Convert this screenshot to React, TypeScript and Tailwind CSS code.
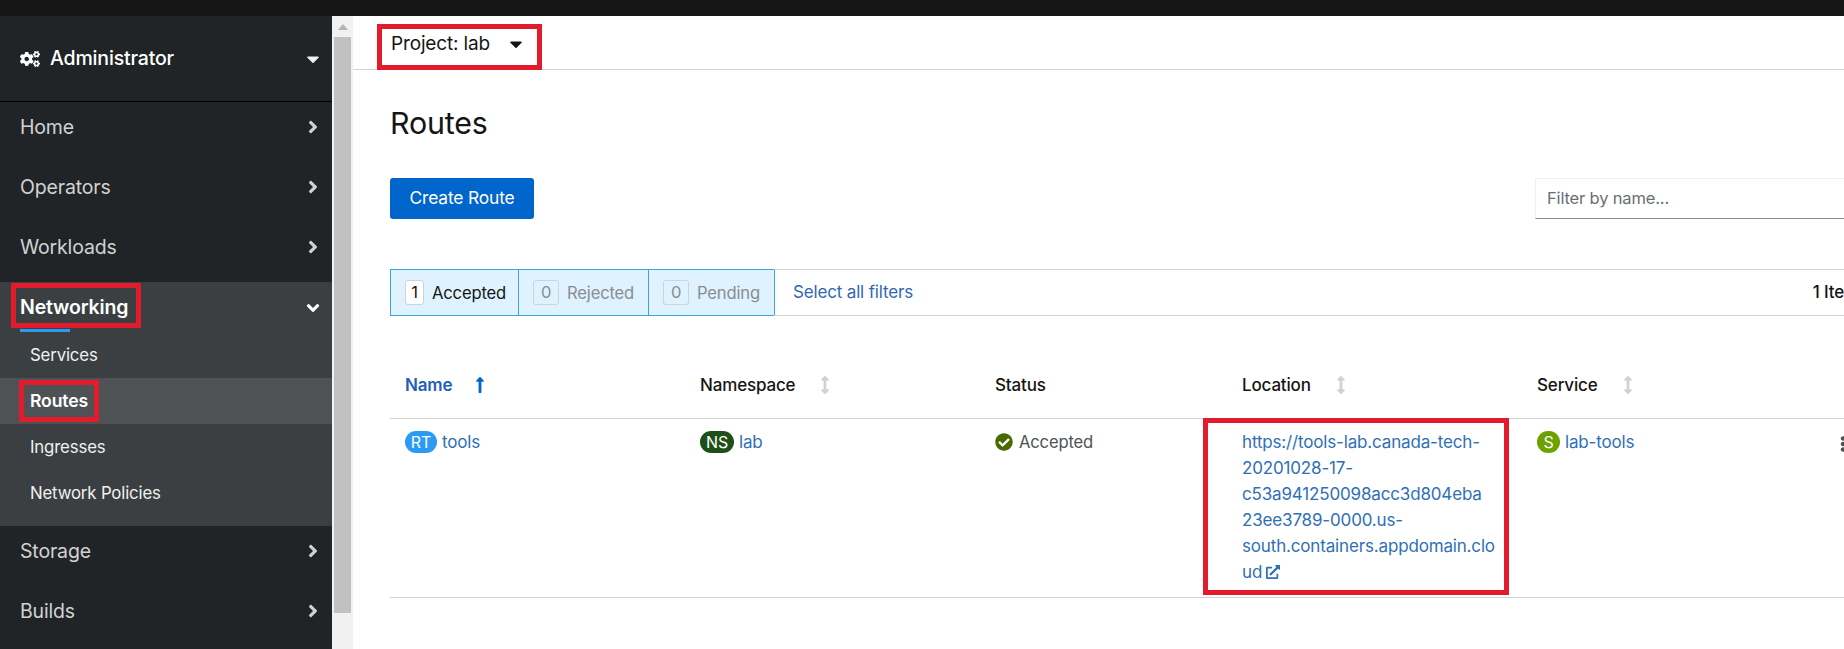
import { FaAngleDown, FaAngleRight, FaArrowsAltV, FaCaretDown, FaCheckCircle, FaCogs, FaEllipsisV, FaExternalLinkAlt, FaLongArrowAltUp } from "react-icons/fa";

const red = "border-[#e31c2d]";

function NavItem({ label }: { label: string }) {
  return (
    <div className="flex h-[50px] items-center justify-between pl-5 pr-[9px] text-[19.5px] text-[#d2d2d2]">
      <span className="pt-[2px]">{label}</span>
      <FaAngleRight className="h-5 w-5 text-[#d2d2d2]" />
    </div>
  );
}

function SubItem({ label }: { label: string }) {
  return <div className="flex h-[46px] items-center pl-[30px] pt-[2px] text-[16.8px] text-[#f0f0f0]">{label}</div>;
}

function FilterBox({ count, label, active, width }: { count: number; label: string; active?: boolean; width: string }) {
  return (
    <div className={`flex h-full items-center gap-[8px] border border-[#39a5dc] bg-[#def3ff] pl-[14px] -ml-px first:ml-0 ${width}`}>
      <span
        className={`flex h-[25px] items-center justify-center rounded-[3px] border border-[#d2d2d2] px-[5px] text-[16.5px] ${
          active ? "min-w-[19px] bg-white text-[#151515]" : "min-w-[26px] text-[#8a8d90]"
        }`}
      >
        {count}
      </span>
      <span className={`pt-px text-[16.6px] ${active ? "text-[#151515]" : "text-[#8a8d90]"}`}>{label}</span>
    </div>
  );
}

function SortHead({ label }: { label: string }) {
  return (
    <div className="flex items-center pl-[15px] text-[17px] font-medium text-[#151515]">
      <span className="pt-px">{label}</span>
      <FaArrowsAltV className="ml-[25px] h-[18px] w-[10px] text-[#d2d2d2]" />
    </div>
  );
}

function Badge({ text, color, width }: { text: string; color: string; width: string }) {
  return (
    <span className={`mr-[5px] inline-flex h-[22px] items-center justify-center rounded-full text-[16px] text-white ${color} ${width}`}>
      {text}
    </span>
  );
}

export default function App() {
  return (
    <div className="flex h-[649px] w-[1844px] flex-col overflow-hidden bg-white font-['Inter',sans-serif] tracking-[-0.01em]">
      <div className="h-4 bg-[#151515]" />
      <div className="flex min-h-0 flex-1">
        <aside className="w-[332px] shrink-0 bg-[#212427]">
          <div className="flex h-[86px] items-center justify-between border-b border-black pl-5 pr-[9px]">
            <div className="flex items-center gap-[10px] text-[19.5px] font-medium text-white">
              <FaCogs className="h-5 w-5" />
              Administrator
            </div>
            <FaCaretDown className="h-5 w-5 text-[#f0f0f0]" />
          </div>
          <div className="flex flex-col gap-[10px]">
            <NavItem label="Home" />
            <NavItem label="Operators" />
            <NavItem label="Workloads" />
          </div>
          <div className="mt-[10px] bg-[#3c3f42] pb-[10px]">
            <div className="flex h-[47px] items-center justify-between pl-5 pr-[9px] pt-[5px] text-[19.5px] font-semibold text-white">
              <span className="relative">
                Networking
                <span className={`absolute -left-[9px] -right-[13px] -top-[10px] -bottom-[5px] border-[5px] ${red}`} />
              </span>
              <FaAngleDown className="h-5 w-5" />
            </div>
            <div className="ml-5 h-[3px] w-[50px] bg-[#2b9af3]" />
            <SubItem label="Services" />
            <div className="flex h-[46px] items-center bg-[#4f5255] pl-[30px] text-[17.6px] font-semibold text-white">
              <span className="relative">
                Routes
                <span className={`absolute -inset-x-[11px] -inset-y-[8px] border-[5px] ${red}`} />
              </span>
            </div>
            <SubItem label="Ingresses" />
            <SubItem label="Network Policies" />
          </div>
          <div className="flex flex-col gap-[10px]">
            <NavItem label="Storage" />
            <NavItem label="Builds" />
          </div>
        </aside>

        <div className="w-[21px] shrink-0 bg-[#f1f1f1] pl-[2px] pr-[2px]">
          <div className="flex h-[21px] items-center justify-center">
            <svg viewBox="0 0 10 6" className="h-[6px] w-[10px]">
              <path d="M5 0 L10 6 L0 6 Z" fill="#b4b4b4" />
            </svg>
          </div>
          <div className="h-[576px] w-[17px] bg-[#c1c1c1]" />
        </div>

        <main className="min-w-0 flex-1 overflow-hidden">
          <div className="h-[54px] border-b border-[#d2d2d2] pl-6 pt-2">
            <div className={`flex h-[46px] w-[165px] items-center justify-between border-[5px] ${red} bg-white pb-[6px] pl-[9px] pr-[11px] text-[19px] text-[#151515]`}>
              <span>Project: lab</span>
              <FaCaretDown className="h-5 w-5" />
            </div>
          </div>

          <div className="ml-[37px] w-[1520px]">
            <h1 className="mt-[33px] h-10 text-[30.4px] leading-10 text-[#151515]">Routes</h1>
            <div className="mt-[35px] flex items-start justify-between">
              <button className="flex h-[41px] w-[144px] items-center justify-center rounded-[3px] bg-[#0066cc] text-[17.4px] text-white">
                Create Route
              </button>
              <div className="flex h-[41px] w-[375px] items-center border border-[#f0f0f0] border-b-[#8a8d90] pl-[11px] text-[16.5px] text-[#6a6e73]">
                Filter by name...
              </div>
            </div>

            <div className="mt-[50px] flex h-[47px] items-center">
              <FilterBox count={1} label="Accepted" active width="w-[129px]" />
              <FilterBox count={0} label="Rejected" width="w-[131px]" />
              <FilterBox count={0} label="Pending" width="w-[127px]" />
              <div className="-ml-px flex h-full flex-1 items-center justify-between border-y border-[#d2d2d2] pl-[19px] pr-[51px]">
                <span className="text-[17px] text-[#2f67b4]">Select all filters</span>
                <span className="text-[17px] font-medium text-[#151515]">1 Item</span>
              </div>
            </div>

            <div className="mt-9 grid h-[67px] grid-cols-[295px_295px_247px_295px_1fr] items-center border-b border-[#d2d2d2]">
              <div className="flex items-center pl-[15px] text-[17px] font-semibold text-[#1e5fb8]">
                <span className="pt-px">Name</span>
                <FaLongArrowAltUp className="ml-[22px] h-[18px] w-[12px] text-[#0066cc]" />
              </div>
              <SortHead label="Namespace" />
              <div className="pl-[15px] pt-px text-[17px] font-medium text-[#151515]">Status</div>
              <SortHead label="Location" />
              <SortHead label="Service" />
            </div>

            <div className="relative grid h-[179px] grid-cols-[295px_295px_247px_295px_1fr] border-b border-[#d2d2d2] pt-[10px] text-[17px] leading-[26px]">
              <div className="flex h-[26px] items-center pl-[15px] text-[#2f6fb7]">
                <Badge text="RT" color="bg-[#2b9af3]" width="w-[32px]" />
                tools
              </div>
              <div className="flex h-[26px] items-center pl-[15px] text-[#2f6fb7]">
                <Badge text="NS" color="bg-[#1e4f18]" width="w-[34px]" />
                lab
              </div>
              <div className="flex h-[26px] items-center pl-[15px] text-[16.6px] text-[#4f5255]">
                <FaCheckCircle className="mr-[6px] h-[18px] w-[18px] text-[#486b00]" />
                Accepted
              </div>
              <div className="pl-[15px] text-[#2f6fb7]">
                <span className="block">https://tools-lab.canada-tech-</span>
                <span className="block">20201028-17-</span>
                <span className="block">c53a941250098acc3d804eba</span>
                <span className="block">23ee3789-0000.us-</span>
                <span className="block">south.containers.appdomain.clo</span>
                <span className="flex items-center">
                  ud
                  <FaExternalLinkAlt className="ml-1 h-[14px] w-[14px]" />
                </span>
              </div>
              <div className="flex h-[26px] items-center pl-[15px] text-[#2f6fb7]">
                <Badge text="S" color="bg-[#6ca100]" width="w-[23px]" />
                lab-tools
              </div>
              <span className={`absolute left-[813px] top-[-1px] h-[177px] w-[306px] border-[5px] ${red}`} />
              <FaEllipsisV className="absolute left-[1450px] top-[16px] h-[18px] w-[6px] text-[#4f5255]" />
            </div>
          </div>
        </main>
      </div>
    </div>
  );
}
